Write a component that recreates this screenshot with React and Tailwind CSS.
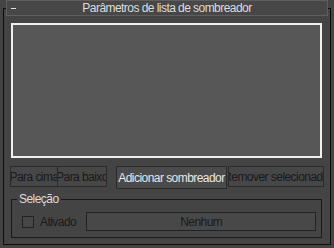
export default function App() {
  const font = { fontFamily: '"Liberation Sans", Arial, sans-serif' };
  return (
    <div className="relative w-[334px] h-[248px] bg-[#444444] overflow-hidden text-[12px] leading-none tracking-[-0.55px]" style={font}>
      {/* outer frame */}
      <div className="absolute left-[3px] top-[8px] w-[328px] h-[237px] border border-[#0d0d0d]" />
      {/* title bar */}
      <div className="relative ml-[6px] w-[322px] h-[16px] border border-[#5e5e5e] bg-[#474747] flex items-center justify-center">
        <div className="absolute left-[4px] top-[7px] w-[5px] h-[1px] bg-[#dcdcdc]" />
        <span className="text-[#dcdcdc]">Parâmetros de lista de sombreador</span>
      </div>
      <div className="relative flex flex-col pl-[11px] pt-[7px]">
        {/* list */}
        <div className="w-[311px] h-[135px] border-2 border-[#f0f0f0] bg-[#575757]" />
        {/* buttons */}
        <div className="flex items-start mt-[8px] ml-[-1px]">
          <div className="w-[48px] h-[21px] border border-[#2a2a2a] bg-[#474747] flex items-center justify-center overflow-hidden whitespace-nowrap text-[#1a1a1a]">Para cima</div>
          <div className="w-[49px] h-[21px] border border-l-0 border-[#2a2a2a] bg-[#474747] flex items-center justify-center overflow-hidden whitespace-nowrap text-[#1a1a1a]">Para baixo</div>
          <div className="ml-[9px] w-[111px] h-[23px] border border-[#2a2a2a] bg-[#4b4b4b] flex items-center justify-center overflow-hidden whitespace-nowrap text-[#e6e6e6]">Adicionar sombreador</div>
          <div className="ml-[1px] w-[96px] h-[21px] border border-[#2a2a2a] bg-[#474747] flex items-center justify-center overflow-hidden whitespace-nowrap text-[#1a1a1a]">Remover selecionado</div>
        </div>
        {/* group */}
        <div className="relative mt-[10px] w-[311px] h-[39px] border border-[#1a1a1a]">
          <span className="absolute left-[5px] top-[-7px] px-[2px] bg-[#444444] text-[#dcdcdc]">Seleção</span>
          <div className="flex items-center mt-[12px] ml-[10px]">
            <div className="w-[12px] h-[12px] border border-[#222222] bg-[#474747]" />
            <span className="ml-[6px] text-[#1a1a1a]">Ativado</span>
            <div className="ml-[10px] w-[230px] h-[19px] border border-[#222222] bg-[#484848] flex items-center justify-center text-[#1a1a1a]">Nenhum</div>
          </div>
        </div>
      </div>
    </div>
  );
}
